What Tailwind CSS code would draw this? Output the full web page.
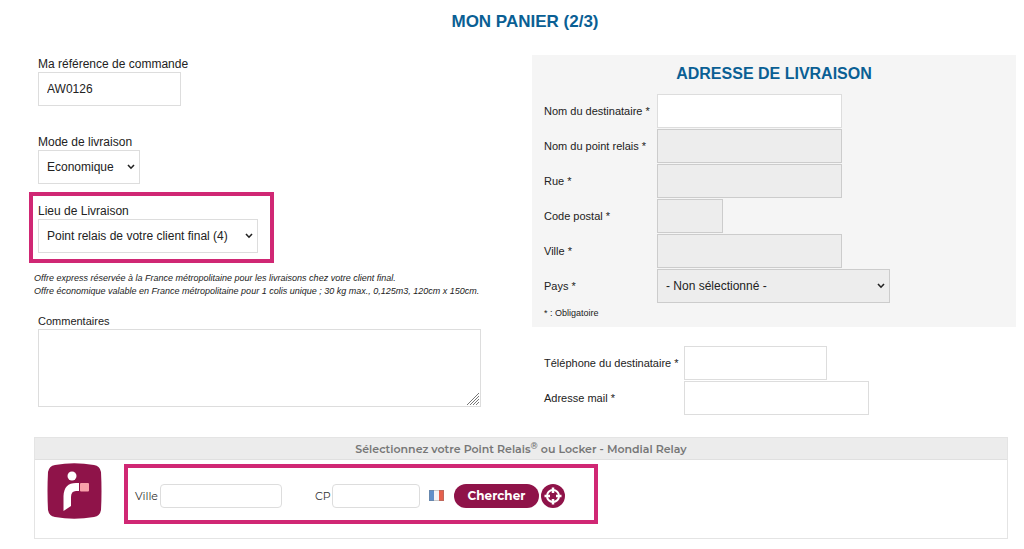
<!DOCTYPE html>
<html lang="fr">
<head>
    <meta charset="UTF-8">
    <meta name="viewport" content="width=device-width, initial-scale=1.0">
    <title>Mon panier (2/3)</title>
    <script src="https://cdn.jsdelivr.net/npm/@tailwindcss/browser@4"></script>
</head>
<body class="bg-white text-[#222] font-['Liberation_Sans',Arial,sans-serif]">
    <form class="pt-3 pl-[29px] pr-2" onsubmit="return false">
        <h1 class="pl-[5px] mb-[23px] text-center text-[17px] leading-5 font-bold text-[#0a5f94]">MON PANIER (2/3)</h1>

        <div class="grid grid-cols-[503fr_484fr]">
            <!-- Commande -->
            <div class="pt-px text-[12px] leading-4">
                <div class="ml-[9px] mb-7">
                    <label for="reference" class="block">Ma référence de commande</label>
                    <input type="text" id="reference" value="AW0126" class="block w-[143px] h-[34px] px-2 border border-[#ddd]">
                </div>
                <div class="ml-[9px] mb-2">
                    <label for="mode" class="block">Mode de livraison</label>
                    <div class="relative w-[102px]">
                        <select id="mode" class="block appearance-none w-full h-[34px] px-2 border border-[#ddd] bg-white">
                            <option>Economique</option>
                        </select>
                        <svg class="absolute right-[5px] top-[14px] w-2 h-[6px] pointer-events-none" viewBox="0 0 8 6" fill="none" stroke="#222" stroke-width="1.600"><path d="M1 1L4 4.200L7 1"/></svg>
                    </div>
                </div>
                <div class="w-[245px] border-4 border-[#d02774] pt-[7px] pb-[6px] pl-[5px]">
                    <label for="lieu" class="block">Lieu de Livraison</label>
                    <div class="relative w-[220px]">
                        <select id="lieu" class="block appearance-none w-full h-[34px] px-2 border border-[#ddd] bg-white">
                            <option>Point relais de votre client final (4)</option>
                        </select>
                        <svg class="absolute right-[5px] top-[14px] w-2 h-[6px] pointer-events-none" viewBox="0 0 8 6" fill="none" stroke="#222" stroke-width="1.600"><path d="M1 1L4 4.200L7 1"/></svg>
                    </div>
                </div>
                <p class="ml-[5px] mt-[9px] mb-[15px] text-[9px] leading-[13px] italic">
                    Offre express réservée à la France métropolitaine pour les livraisons chez votre client final.<br>
                    Offre économique valable en France métropolitaine pour 1 colis unique ; 30 kg max., 0,125m3, 120cm x 150cm.
                </p>
                <div class="relative ml-[9px] mr-[51px]">
                    <label for="commentaires" class="block text-[11px] leading-4">Commentaires</label>
                    <textarea id="commentaires" class="block w-full h-[78px] p-2 border border-[#ddd]"></textarea>
                    <svg class="absolute right-px bottom-px w-[14px] h-[14px] bg-white pointer-events-none" viewBox="0 0 14 14" stroke="#777"><path d="M1 13L13 1M4 13L13 4M7 13L13 7M10 13L13 10"/></svg>
                </div>
            </div>

            <!-- Adresse -->
            <div class="text-[11px] leading-4">
                <div class="bg-[#f5f5f5] px-3 pt-[9px] pb-[6px]">
                    <h2 class="mb-[10px] text-center text-[16px] leading-5 font-bold text-[#0a5f94]">ADRESSE DE LIVRAISON</h2>
                    <div class="grid grid-cols-[113px_1fr] gap-y-px items-center">
                        <label for="nom">Nom du destinataire *</label>
                        <input type="text" id="nom" class="w-[185px] h-[34px] px-2 border border-[#ddd] bg-white text-[12px]">
                        <label for="relais">Nom du point relais *</label>
                        <input type="text" id="relais" readonly class="w-[185px] h-[34px] px-2 border border-[#ccc] bg-[#ededed] text-[12px]">
                        <label for="rue">Rue *</label>
                        <input type="text" id="rue" readonly class="w-[185px] h-[34px] px-2 border border-[#ccc] bg-[#ededed] text-[12px]">
                        <label for="codepostal">Code postal *</label>
                        <input type="text" id="codepostal" readonly class="w-[66px] h-[34px] px-2 border border-[#ccc] bg-[#ededed] text-[12px]">
                        <label for="ville">Ville *</label>
                        <input type="text" id="ville" readonly class="w-[185px] h-[34px] px-2 border border-[#ccc] bg-[#ededed] text-[12px]">
                        <label for="pays">Pays *</label>
                        <div class="relative w-[233px]">
                            <select id="pays" class="block appearance-none w-full h-[34px] px-2 border border-[#ccc] bg-[#ededed] text-[12px]">
                                <option>- Non sélectionné -</option>
                            </select>
                            <svg class="absolute right-[5px] top-[14px] w-2 h-[6px] pointer-events-none" viewBox="0 0 8 6" fill="none" stroke="#222" stroke-width="1.600"><path d="M1 1L4 4.200L7 1"/></svg>
                        </div>
                    </div>
                    <p class="mt-[2px] text-[9px] leading-4">* : Obligatoire</p>
                </div>
                <div class="grid grid-cols-[140px_1fr] gap-y-px items-center px-3 mt-[19px]">
                    <label for="telephone">Téléphone du destinataire *</label>
                    <input type="text" id="telephone" class="w-[143px] h-[34px] px-2 border border-[#ddd] text-[12px]">
                    <label for="mail">Adresse mail *</label>
                    <input type="email" id="mail" class="w-[185px] h-[34px] px-2 border border-[#ddd] text-[12px]">
                </div>
            </div>
        </div>

        <!-- Point relais -->
        <div class="ml-[5px] mr-2 mt-[22px] border border-[#e4e4e4] font-[Montserrat,Inter,sans-serif]">
            <div class="bg-[#ececec] border-b border-[#e0e0e0] pt-px text-center text-[11px] leading-5 font-semibold text-[#777]">Sélectionnez votre Point Relais<sup class="text-[9px]">®</sup> ou Locker - Mondial Relay</div>
            <div class="flex items-start pt-[3px] pb-[14px] pl-3">
                <svg class="w-[55px] h-14 shrink-0" viewBox="0 0 55 56">
                    <path d="M8 2Q27 -1.500 47 2Q53 3 54 9Q55 28 54 47Q53 53 47 54Q27 57.500 8 54Q2 53 1 47Q0 28 1 9Q2 3 8 2Z" fill="#8f1349"/>
                    <circle cx="25" cy="13" r="4.500" fill="#fff"/>
                    <path d="M32 20V28H29Q24 28 24 34V43L16.500 48V33Q17 20 29 20Z" fill="#fff"/>
                    <rect x="33" y="20" width="9" height="8.500" rx="1" fill="#f9a0aa"/>
                </svg>
                <div class="ml-[22px] mt-px flex items-center w-[474px] h-[60px] border-4 border-[#d02774] px-[7px] pt-[3px] text-[11px] leading-4 text-[#333]">
                    <label for="relais-ville" class="w-[25px]">Ville</label>
                    <input type="text" id="relais-ville" class="w-[122px] h-6 px-2 border border-[#ddd] rounded">
                    <label for="relais-cp" class="ml-[33px] w-[17px]">CP</label>
                    <input type="text" id="relais-cp" class="w-[88px] h-6 px-2 border border-[#ddd] rounded">
                    <svg class="ml-[9px] w-[15px] h-[11px]" viewBox="0 0 15 11">
                        <rect width="5" height="11" fill="#5f8fc9"/>
                        <rect x="5" width="5" height="11" fill="#f3f3f5"/>
                        <rect x="10" width="5" height="11" fill="#e5604d"/>
                        <rect x=".5" y=".5" width="14" height="10" fill="none" stroke="#777" stroke-opacity=".35"/>
                    </svg>
                    <button type="submit" class="ml-[10px] w-[85px] h-6 rounded-full bg-[#8f1349] text-[12px] leading-4 font-bold text-white">Chercher</button>
                    <button type="button" aria-label="Me localiser" class="ml-[2px] size-6 rounded-full bg-[#8f1349]">
                        <svg class="size-6" viewBox="0 0 24 24" fill="none" stroke="#fff">
                            <circle cx="12" cy="12" r="6" stroke-width="2"/>
                            <path d="M12 3.500V9M12 15V20.500M3.500 12H9M15 12H20.500" stroke-width="2.500"/>
                        </svg>
                    </button>
                </div>
            </div>
        </div>
    </form>
</body>
</html>
